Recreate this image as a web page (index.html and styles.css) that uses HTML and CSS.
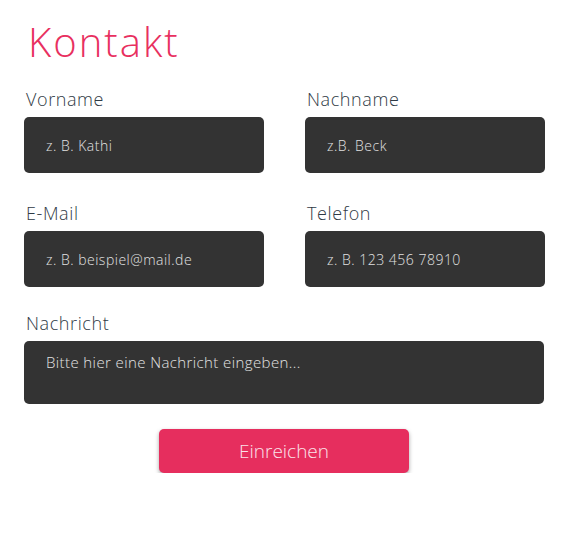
FILE: index.html
```html
<!DOCTYPE html>
<html lang="de">
<head>
<meta charset="utf-8">
<title>Kontakt</title>
<link rel="stylesheet" href="styles.css">
</head>
<body>
<form class="contact">
  <h1 class="title">Kontakt</h1>
  <div class="grid">
    <div class="field">
      <label class="label">Vorname</label>
      <input class="input" type="text" placeholder="z. B. Kathi">
    </div>
    <div class="field">
      <label class="label">Nachname</label>
      <input class="input" type="text" placeholder="z.B. Beck">
    </div>
    <div class="field row2">
      <label class="label">E-Mail</label>
      <input class="input" type="text" placeholder="z. B. beispiel@mail.de">
    </div>
    <div class="field row2">
      <label class="label">Telefon</label>
      <input class="input" type="text" placeholder="z. B. 123 456 78910">
    </div>
  </div>
  <div class="field message">
    <label class="label">Nachricht</label>
    <textarea class="textarea" placeholder="Bitte hier eine Nachricht eingeben..."></textarea>
  </div>
  <div class="actions">
    <button class="button" type="button">Einreichen</button>
  </div>
</form>
</body>
</html>
```

FILE: styles.css
```css
html, body {
  margin: 0;
  padding: 0;
  background: #ffffff;
}

body {
  font-family: "Open Sans", "Liberation Sans", sans-serif;
  font-weight: 300;
  color: #333;
}

.contact {
  width: 521px;
  padding: 18px 0 0 24px;
}

.title {
  margin: 0 0 22px 4px;
  font-size: 40px;
  line-height: 48px;
  font-weight: 300;
  letter-spacing: 2px;
  color: #e8305f;
}

.grid {
  display: grid;
  grid-template-columns: 240px 240px;
  column-gap: 41px;
}

.field {
  display: flex;
  flex-direction: column;
}

.row2 {
  margin-top: 29px;
}

.label {
  font-size: 18px;
  line-height: 22px;
  margin: 0 0 7px 2px;
  letter-spacing: 0.6px;
  color: #2f3a45;
}

.input,
.textarea {
  box-sizing: border-box;
  border: none;
  border-radius: 5px;
  background: #333333;
  color: #e6e6e6;
  font-family: inherit;
  font-weight: 300;
  outline: none;
}

.input {
  height: 56px;
  padding: 0 22px;
  font-size: 14px;
  letter-spacing: 0.5px;
}

.message {
  margin-top: 25px;
  width: 520px;
}

.textarea {
  height: 63px;
  padding: 11px 22px;
  font-size: 15px;
  line-height: 20px;
  letter-spacing: 0.4px;
  resize: none;
}

.input::placeholder,
.textarea::placeholder {
  color: #e2e2e2;
  opacity: 1;
}

.actions {
  width: 520px;
  display: flex;
  justify-content: center;
  margin-top: 25px;
}

.button {
  width: 250px;
  height: 44px;
  border: none;
  border-radius: 5px;
  background: #e62e5e;
  color: #fbe3ea;
  font-family: inherit;
  font-weight: 300;
  font-size: 19px;
  letter-spacing: 0;
  box-shadow: 0 2px 4px rgba(0, 0, 0, 0.35);
  cursor: pointer;
}
```
